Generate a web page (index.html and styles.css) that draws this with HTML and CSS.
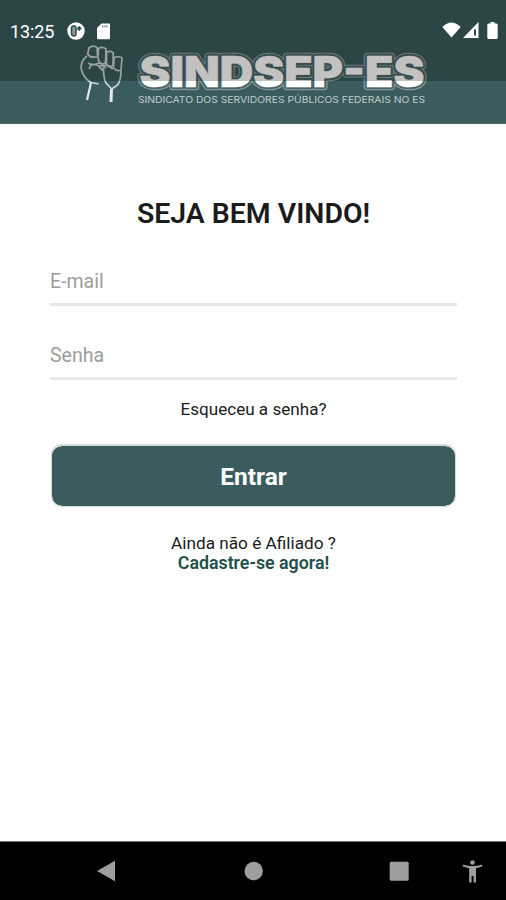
FILE: index.html
```html
<!DOCTYPE html>
<html lang="pt-BR">
<head>
    <meta charset="UTF-8">
    <meta name="viewport" content="width=device-width, initial-scale=1.0">
    <title>SINDSEP-ES</title>
    <link rel="stylesheet" href="styles.css">
</head>
<body>
    <div class="screen">
        <header class="header">
            <svg class="logo" width="350" height="64" viewBox="0 0 350 64">
                <defs>
                    <text id="brand" class="brand" x="60.5" y="43.8" textLength="285" lengthAdjust="spacingAndGlyphs">SINDSEP-ES</text>
                </defs>
                <g class="fist">
                    <path d="M8.5 12 L10 5 Q14 1.5 18 4.5 L18.5 13" />
                    <path d="M19 14 L19.5 5.5 Q23.5 3 27 6 L26.5 20 Q23 22 20 19 Z" />
                    <path d="M27.5 9.5 Q31 7 34.3 10 L34 22 Q31 25 27.5 22 Z" />
                    <path d="M35 15 Q39 12.5 43 15 L42 27 Q38 29 34.5 25 Z" />
                    <path d="M9 11 C10 15 14 14 18 14 M8 13 C3 17 1.5 22 2.5 27 C4 34 8 37 12 39.5 L19.7 41" />
                    <path class="arm" d="M12 39.5 L11 44 L8 57" />
                    <path d="M42 28 C42 34 41.5 38 38.5 42 L32.7 46 L27 40 C24.5 36 24.5 31 24.5 24" />
                    <path class="wrist" d="M32.5 46 L32 59" />
                    <path d="M10 26 L12.5 21 L21 23 L28 22 L34 26 M9 20 L13 22 L21 20 L27 25 M19 23 L24.5 28" />
                </g>
                <use href="#brand" class="brand-outline" />
                <use href="#brand" class="brand-gap" />
                <use href="#brand" class="brand-fill" />
                <text class="tagline" x="59" y="60" textLength="287" lengthAdjust="spacingAndGlyphs">SINDICATO DOS SERVIDORES PÚBLICOS FEDERAIS NO ES</text>
            </svg>
            <div class="status-bar">
                <span class="clock">13:25</span>
                <svg class="app-icon" width="18" height="18" viewBox="0 0 18 18">
                    <circle cx="9" cy="9" r="8.7" fill="#fff" />
                    <path d="M7.8 4 H6.5 Q4.5 4 4.5 6 V11 Q4.5 14 7 14 Q9 14 9 11 V6 Q9 4 7.8 4 Z" fill="#8b9a9c" stroke="#2c474a" stroke-width="1.5" />
                    <path d="M12.2 4.3 V8.7 M10.2 6.5 H14.4" stroke="#2c474a" stroke-width="1.8" />
                </svg>
                <svg class="card-icon" width="13" height="17" viewBox="0 0 13 17">
                    <path d="M4.5 .5 H12 Q13 .5 13 1.5 V15 Q13 16.3 12 16.3 H1 Q0 16.3 0 15 V5 Z" fill="#fff" />
                    <path d="M5 3.3 H11" stroke="#6d8083" stroke-width="1.8" stroke-dasharray="1.4 .7" />
                </svg>
                <div class="signals">
                    <svg width="19" height="16" viewBox="0 0 19 16">
                        <path d="M.3 5 Q9.5 -4 18.7 5 L9.5 15.5 Z" fill="#fff" />
                    </svg>
                    <svg width="16" height="16" viewBox="0 0 16 16">
                        <path d="M0 16 L15.5 0 V16 Z" fill="#fff" />
                        <path d="M11 7.5 H13 V13.5 H11 Z" fill="#2c474a" />
                    </svg>
                    <svg class="battery" width="11" height="17" viewBox="0 0 11 17">
                        <path d="M3.5 0 H7.5 V1.5 H9.5 Q10.7 1.5 10.7 3 V15.5 Q10.7 17 9.3 17 H1.7 Q.3 17 .3 15.5 V3 Q.3 1.5 1.7 1.5 H3.5 Z" fill="#fff" />
                    </svg>
                </div>
            </div>
        </header>

        <main class="content">
            <h1>SEJA BEM VINDO!</h1>
            <form class="login-form">
                <input type="email" placeholder="E-mail" aria-label="E-mail">
                <input type="password" placeholder="Senha" aria-label="Senha">
                <a class="forgot">Esqueceu a senha?</a>
                <button type="submit">Entrar</button>
            </form>
            <p class="signup">Ainda não é Afiliado ?<br><a class="signup-link">Cadastre-se agora!</a></p>
        </main>

        <nav class="nav-bar">
            <svg width="506" height="58" viewBox="0 0 506 58" fill="#9e9e9e">
                <path d="M97 29 L115 18.8 V39.2 Z" />
                <circle cx="253.7" cy="29" r="9.2" />
                <rect x="389.7" y="19.7" width="19" height="19" rx="1.5" />
                <circle cx="472.5" cy="20.5" r="2.3" />
                <path d="M463 22.5 Q472.5 25.5 482 22.5 L482.3 24.6 L476 26.2 V40.5 H473.6 V34 H471.6 V40.5 H469.2 V26.2 L462.7 24.6 Z" />
            </svg>
        </nav>
    </div>
</body>
</html>
```
FILE: styles.css
```css
:root {
    --primary-color: #3a5c5e;
    --link-color: #1f5049;
    --border-color: #e8e8e8;
}

* {
    box-sizing: border-box;
    margin: 0;
    padding: 0;
}

body {
    font-family: Roboto, sans-serif;
    background-color: white;
    color: #1b1b1b;
}

.screen {
    display: flex;
    flex-direction: column;
    height: 900px;
    width: 506px;
    overflow: hidden;
}

.header {
    position: relative;
    height: 124px;
    padding: 43px 0 0 79px;
    background-color: var(--primary-color);
    border-bottom: 1px solid #52706f;
}

.logo {
    display: block;
}

.fist {
    fill: none;
    stroke: #ccd3d4;
    stroke-width: 1.7;
    stroke-linejoin: round;
}

.arm {
    stroke: #e4e8e8;
    stroke-width: 2.2;
}

.wrist {
    stroke: #e4e8e8;
    stroke-width: 3;
}

.brand {
    font-family: Inter, sans-serif;
    font-size: 43px;
    font-weight: 900;
}

.brand-outline {
    fill: none;
    stroke: #8fa1a2;
    stroke-width: 6.5px;
    stroke-linejoin: round;
}

.brand-gap {
    fill: none;
    stroke: #4a6567;
    stroke-width: 4.5px;
    stroke-linejoin: round;
}

.brand-fill {
    fill: white;
    stroke: white;
    stroke-width: 0.5px;
}

.tagline {
    font-family: Inter, sans-serif;
    font-size: 9.5px;
    fill: #c3cdcd;
}

/* translucent, lies over the top of the logo */
.status-bar {
    position: absolute;
    top: 0;
    left: 0;
    width: 100%;
    height: 81px;
    padding: 21px 8px 0 10px;
    display: flex;
    align-items: flex-start;
    background-color: rgba(0, 0, 0, 0.24);
    color: white;
}

.clock {
    width: 57px;
    font-size: 18px;
    line-height: 21px;
    letter-spacing: -0.1px;
}

.app-icon {
    margin-top: 1px;
}

.card-icon {
    margin: 2px 0 0 12px;
}

.signals {
    display: flex;
    gap: 2px;
    margin: 1px 0 0 auto;
}

.battery {
    margin-left: 6px;
}

.content {
    flex: 1;
    padding: 73px 49px 0 50px;
    text-align: center;
}

h1 {
    font-size: 28.4px;
    font-weight: 600;
    line-height: 34px;
}

.login-form {
    display: flex;
    flex-direction: column;
    align-items: center;
}

input {
    width: 100%;
    height: 46px;
    margin-top: 28px;
    border: none;
    border-bottom: 3px solid var(--border-color);
    font-family: inherit;
    font-size: 19.5px;
    background: none;
}

h1 + .login-form input:first-child {
    margin-top: 29px;
}

input::placeholder {
    color: #9d9d9d;
}

.forgot {
    margin-top: 19px;
    font-size: 17.1px;
    line-height: 20px;
}

button {
    width: 405px;
    height: 63px;
    margin-top: 25px;
    padding-top: 1px;
    border: 1px solid #d5dcda;
    border-top-width: 2px;
    border-radius: 11px;
    background-color: var(--primary-color);
    background-clip: padding-box;
    color: white;
    font-family: inherit;
    font-size: 24.5px;
    font-weight: 700;
}

.signup {
    margin-top: 27px;
    font-size: 17.2px;
    line-height: 19px;
}

.signup-link {
    color: var(--link-color);
    font-size: 17.8px;
    font-weight: 600;
}

.nav-bar {
    height: 59px;
    border-top: 1px solid #777;
    background-color: black;
}
```
